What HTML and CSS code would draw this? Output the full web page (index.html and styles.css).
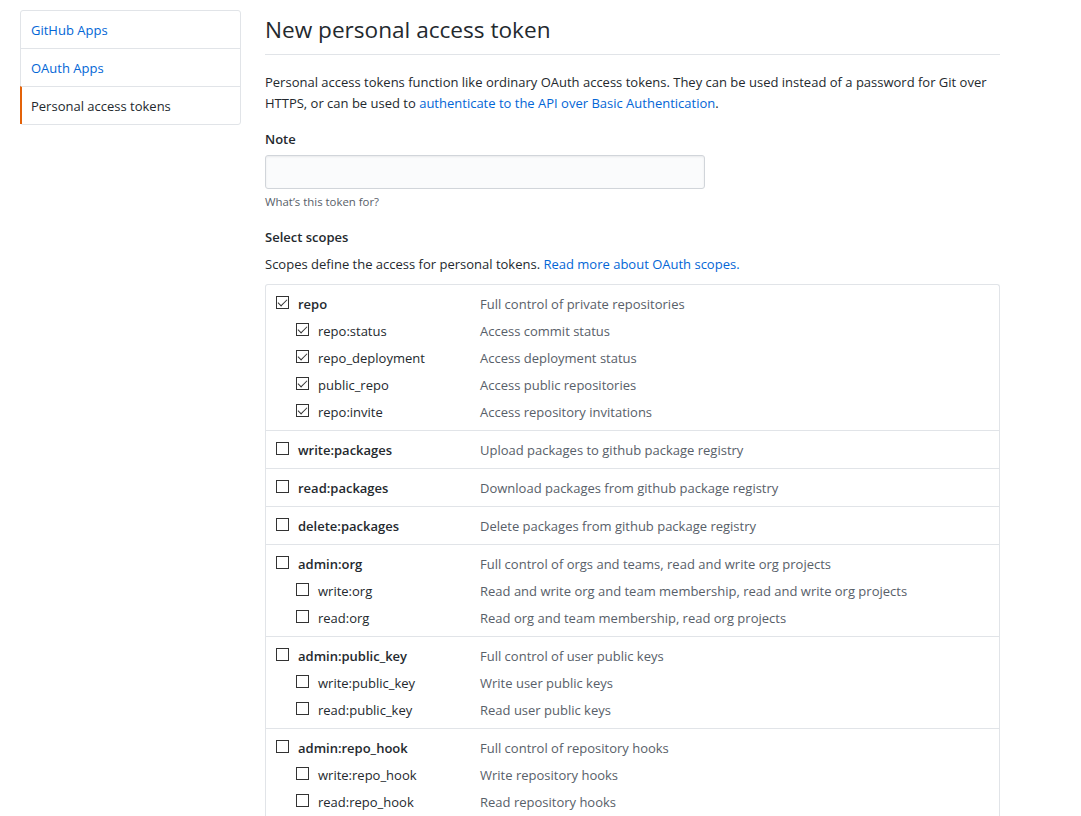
FILE: index.html
```html
<!DOCTYPE html>
<html>
<head>
<meta charset="utf-8">
<link rel="stylesheet" href="styles.css">
</head>
<body>
<div class="page">
  <nav class="menu">
    <a class="menu-item">GitHub Apps</a>
    <a class="menu-item">OAuth Apps</a>
    <a class="menu-item selected">Personal access tokens</a>
  </nav>
  <main class="main">
    <h2 class="subhead">New personal access token</h2>
    <p class="intro">Personal access tokens function like ordinary OAuth access tokens. They can be used instead of a password for Git over HTTPS, or can be used to <a class="link">authenticate to the API over Basic Authentication</a>.</p>
    <div class="label">Note</div>
    <div class="input"></div>
    <div class="note">What’s this token for?</div>
    <div class="label scopes-label">Select scopes</div>
    <p class="scopes-desc">Scopes define the access for personal tokens. <a class="link">Read more about OAuth scopes.</a></p>
    <div class="scopes">
      <div class="group">
        <div class="row"><span class="cb checked"></span><span class="name main-name">repo</span><span class="desc">Full control of private repositories</span></div>
        <div class="row sub"><span class="cb checked"></span><span class="name">repo:status</span><span class="desc">Access commit status</span></div>
        <div class="row sub"><span class="cb checked"></span><span class="name">repo_deployment</span><span class="desc">Access deployment status</span></div>
        <div class="row sub"><span class="cb checked"></span><span class="name">public_repo</span><span class="desc">Access public repositories</span></div>
        <div class="row sub"><span class="cb checked"></span><span class="name">repo:invite</span><span class="desc">Access repository invitations</span></div>
      </div>
      <div class="group">
        <div class="row"><span class="cb"></span><span class="name main-name">write:packages</span><span class="desc">Upload packages to github package registry</span></div>
      </div>
      <div class="group">
        <div class="row"><span class="cb"></span><span class="name main-name">read:packages</span><span class="desc">Download packages from github package registry</span></div>
      </div>
      <div class="group">
        <div class="row"><span class="cb"></span><span class="name main-name">delete:packages</span><span class="desc">Delete packages from github package registry</span></div>
      </div>
      <div class="group">
        <div class="row"><span class="cb"></span><span class="name main-name">admin:org</span><span class="desc">Full control of orgs and teams, read and write org projects</span></div>
        <div class="row sub"><span class="cb"></span><span class="name">write:org</span><span class="desc">Read and write org and team membership, read and write org projects</span></div>
        <div class="row sub"><span class="cb"></span><span class="name">read:org</span><span class="desc">Read org and team membership, read org projects</span></div>
      </div>
      <div class="group">
        <div class="row"><span class="cb"></span><span class="name main-name">admin:public_key</span><span class="desc">Full control of user public keys</span></div>
        <div class="row sub"><span class="cb"></span><span class="name">write:public_key</span><span class="desc">Write user public keys</span></div>
        <div class="row sub"><span class="cb"></span><span class="name">read:public_key</span><span class="desc">Read user public keys</span></div>
      </div>
      <div class="group">
        <div class="row"><span class="cb"></span><span class="name main-name">admin:repo_hook</span><span class="desc">Full control of repository hooks</span></div>
        <div class="row sub"><span class="cb"></span><span class="name">write:repo_hook</span><span class="desc">Write repository hooks</span></div>
        <div class="row sub"><span class="cb"></span><span class="name">read:repo_hook</span><span class="desc">Read repository hooks</span></div>
      </div>
    </div>
  </main>
</div>
</body>
</html>
```
FILE: styles.css
```css
* { box-sizing: border-box; }
html, body { margin: 0; padding: 0; background: #fff; }
body {
  font-family: "Open Sans", "Noto Sans", "Liberation Sans", sans-serif;
  font-size: 13px;
  line-height: 21px;
  color: #24292e;
  overflow: hidden;
  height: 816px;
}
.page {
  display: flex;
  align-items: flex-start;
  gap: 24px;
  padding: 10px 0 0 20px;
}
.menu {
  width: 221px;
  flex: none;
  border: 1px solid #e1e4e8;
  border-radius: 3px;
  display: flex;
  flex-direction: column;
}
.menu-item {
  display: block;
  padding: 9px 10px 7px;
  color: #0366d6;
  border-top: 1px solid #e1e4e8;
  height: 38px;
}
.menu-item:first-child { border-top: 0; height: 37px; }
.menu-item.selected {
  color: #24292e;
  border-left: 2px solid #e36209;
  padding-left: 9px;
  margin-left: -1px;
}
.main {
  width: 735px;
  flex: none;
}
.subhead {
  margin: 2px 0 17px;
  padding-bottom: 6px;
  border-bottom: 1px solid #e1e4e8;
  font-size: 22.6px;
  line-height: 36px;
  font-weight: 400;
}
.intro { margin: 0 0 15px; }
.link { color: #0366d6; }
.label { font-weight: 600; margin-bottom: 5px; }
.input {
  width: 440px;
  height: 34px;
  background: #fafbfc;
  border: 1px solid #d1d5da;
  border-radius: 3px;
  box-shadow: inset 0 1px 2px rgba(27,31,35,0.075);
}
.note {
  font-size: 11.4px;
  line-height: 18px;
  color: #586069;
  margin-top: 4px;
}
.scopes-label { margin-top: 16px; margin-bottom: 6px; }
.scopes-desc { margin: 0 0 9px; }
.scopes {
  border: 1px solid #e1e4e8;
  border-bottom: 0;
  border-radius: 3px 3px 0 0;
}
.group {
  padding: 5px 0;
  border-top: 1px solid #e1e4e8;
}
.group:first-child { border-top: 0; }
.row {
  display: flex;
  align-items: center;
  height: 27px;
  padding-left: 10px;
  padding-top: 2px;
}
.row.sub { padding-left: 30px; }
.cb {
  width: 13px;
  height: 13px;
  border: 1px solid #333;
  flex: none;
  margin-right: 9px;
  margin-top: -4px;
  position: relative;
  background: #fff;
}
.cb.checked::after {
  content: "";
  position: absolute;
  left: 3px;
  top: 0px;
  width: 4px;
  height: 8px;
  border-right: 1px solid #333;
  border-bottom: 1px solid #333;
  transform: rotate(45deg);
}
.name { width: 162px; flex: none; }
.row:not(.sub) .name { width: 182px; }
.main-name { font-weight: 600; }
.desc { color: #586069; }
```
